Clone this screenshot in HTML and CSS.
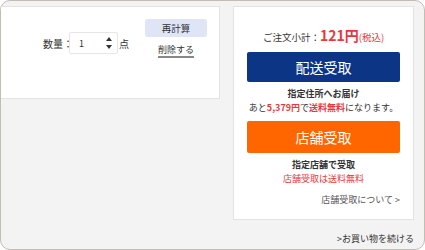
FILE: index.html
```html
<!DOCTYPE html>
<html lang="ja">
<head>
  <meta charset="UTF-8">
  <meta name="viewport" content="width=device-width, initial-scale=1.0">
  <title>カート</title>
  <link rel="stylesheet" href="styles.css">
</head>
<body>
  <div class="frame">
    <div class="panels">
      <div class="item-box">
        <div class="qty">
          <span class="qty-label">数量：</span>
          <div class="qty-input">
            <span class="qty-value">1</span>
            <span class="spin">
              <svg width="6" height="14" viewBox="0 0 6 14"><path d="M3 1 L6 5 L0 5 Z" fill="#333"/><path d="M0 9 L6 9 L3 13 Z" fill="#333"/></svg>
            </span>
          </div>
          <span class="qty-unit">点</span>
        </div>
        <div class="actions">
          <button class="btn-recalc">再計算</button>
          <a class="link-delete" href="#">削除する</a>
        </div>
      </div>

      <div class="order-box">
        <p class="subtotal">ご注文小計：<span class="price">121円</span><span class="tax">(税込)</span></p>
        <button class="btn btn-delivery">配送受取</button>
        <p class="note-title">指定住所へお届け</p>
        <p class="note">あと<span class="red bold">5,379円</span>で<span class="red bold">送料無料</span>になります。</p>
        <button class="btn btn-store">店舗受取</button>
        <p class="note-title">指定店舗で受取</p>
        <p class="note red">店舗受取は送料無料</p>
        <p class="store-link"><a href="#">店舗受取について &gt;</a></p>
      </div>
    </div>
    <p class="continue"><a href="#">&gt;お買い物を続ける</a></p>
  </div>
</body>
</html>
```

FILE: styles.css
```css
body {
  margin: 0;
  font-family: "Noto Sans CJK JP", "Noto Sans", sans-serif;
  color: #333;
  background: #fff;
}

p {
  margin: 0;
}

a {
  color: #333;
  text-decoration: none;
}

.frame {
  width: 425px;
  height: 250px;
  box-sizing: border-box;
  border: 1px solid #c2bdb5;
  border-radius: 10px;
  background: #f3f3f3;
  padding-top: 5px;
  overflow: hidden;
}

.panels {
  display: flex;
  align-items: flex-start;
}

/* 商品行 */
.item-box {
  width: 219px;
  height: 93px;
  box-sizing: border-box;
  background: #fff;
  border: 1px solid #e3e3e3;
  border-left: none;
  display: flex;
  align-items: flex-start;
  padding: 12px 0 0 42px;
}

.qty {
  display: flex;
  align-items: center;
  margin-top: 13px;
  font-size: 10px;
}

.qty-label {
  width: 26px;
  white-space: nowrap;
}

.qty-input {
  width: 49px;
  height: 22px;
  box-sizing: border-box;
  border: 1px solid #e6e6e6;
  border-radius: 2px;
  display: flex;
  align-items: center;
  justify-content: space-between;
  padding: 0 5px 0 9px;
  font-size: 9px;
}

.spin {
  display: flex;
}

.qty-unit {
  margin-left: 1px;
}

.actions {
  display: flex;
  flex-direction: column;
  align-items: center;
  margin-left: 16px;
}

.btn-recalc {
  width: 62px;
  height: 18px;
  border: none;
  border-radius: 3px;
  background: #dfe5f7;
  color: #333;
  font-family: inherit;
  font-size: 9.5px;
  padding: 0;
  line-height: 18px;
}

.link-delete {
  margin-top: 6px;
  font-size: 9px;
  line-height: 13px;
  border-bottom: 2px solid #888;
}

/* 注文ボックス */
.order-box {
  width: 181px;
  box-sizing: border-box;
  margin-left: 13px;
  background: #fff;
  border: 1px solid #e3e3e3;
  padding: 18px 13px 12px;
  text-align: center;
}

.subtotal {
  font-size: 9.5px;
  line-height: 20px;
}

.price {
  color: #e8383d;
  font-size: 14px;
  font-weight: bold;
}

.tax {
  color: #e8383d;
  font-size: 9.5px;
}

.btn {
  display: block;
  width: 100%;
  border: none;
  border-radius: 2px;
  color: #fff;
  font-family: inherit;
  font-size: 14px;
  padding: 0;
}

.btn-delivery {
  height: 30px;
  margin-top: 5px;
  background: #0c3586;
}

.btn-store {
  height: 32px;
  margin-top: 6px;
  background: #ff6600;
}

.note-title {
  margin-top: 5px;
  font-size: 9px;
  font-weight: bold;
  line-height: 14px;
}

.note {
  font-size: 9px;
  line-height: 14px;
}

.red {
  color: #e8383d;
}

.bold {
  font-weight: bold;
}

.store-link {
  margin-top: 7px;
  text-align: right;
  font-size: 9px;
  line-height: 14px;
}

.store-link a {
  color: #555;
}

.continue {
  text-align: right;
  padding-right: 10px;
  margin-top: 12px;
  font-size: 9px;
  line-height: 14px;
}
```
